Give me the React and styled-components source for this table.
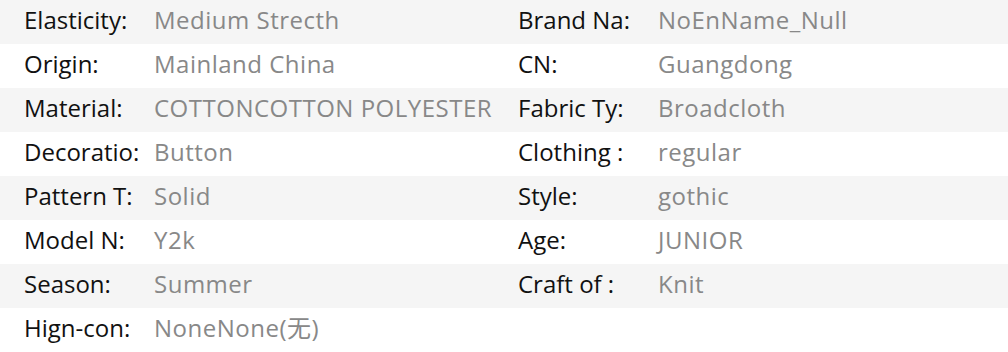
import React from "react";
import styled, { createGlobalStyle } from "styled-components";

const Global = createGlobalStyle`
  html, body { margin: 0; padding: 0; background: #fff; }
  body { font-family: "Open Sans", "Noto Sans CJK SC", sans-serif; }
`;

const Table = styled.div`
  width: 1008px;
  display: flex;
  flex-direction: column;
`;

const Row = styled.div`
  display: grid;
  grid-template-columns: 130px 364px 140px 1fr;
  height: 44px;
  padding-left: 24px;
  align-items: center;
  background: ${(p) => (p.$shade ? "#f5f5f5" : "#ffffff")};
`;

const Label = styled.span`
  font-size: 24px;
  line-height: 40px;
  padding-bottom: 4px;
  color: #111;
  white-space: nowrap;
`;

const Value = styled.span`
  font-size: 24px;
  line-height: 40px;
  padding-bottom: 4px;
  letter-spacing: 0.5px;
  color: #888;
  white-space: nowrap;
`;

const rows = [
  ["Elasticity:", "Medium Strecth", "Brand Na:", "NoEnName_Null"],
  ["Origin:", "Mainland China", "CN:", "Guangdong"],
  ["Material:", "COTTONCOTTON POLYESTER", "Fabric Ty:", "Broadcloth"],
  ["Decoratio:", "Button", "Clothing :", "regular"],
  ["Pattern T:", "Solid", "Style:", "gothic"],
  ["Model N:", "Y2k", "Age:", "JUNIOR"],
  ["Season:", "Summer", "Craft of :", "Knit"],
  ["Hign-con:", "NoneNone(无)"],
];

export default function App() {
  return (
    <>
      <Global />
      <Table>
        {rows.map((r, i) => (
          <Row key={i} $shade={i % 2 === 0}>
            <Label>{r[0]}</Label>
            <Value>{r[1]}</Value>
            {r[2] ? <Label>{r[2]}</Label> : <span />}
            {r[3] ? <Value>{r[3]}</Value> : <span />}
          </Row>
        ))}
      </Table>
    </>
  );
}
